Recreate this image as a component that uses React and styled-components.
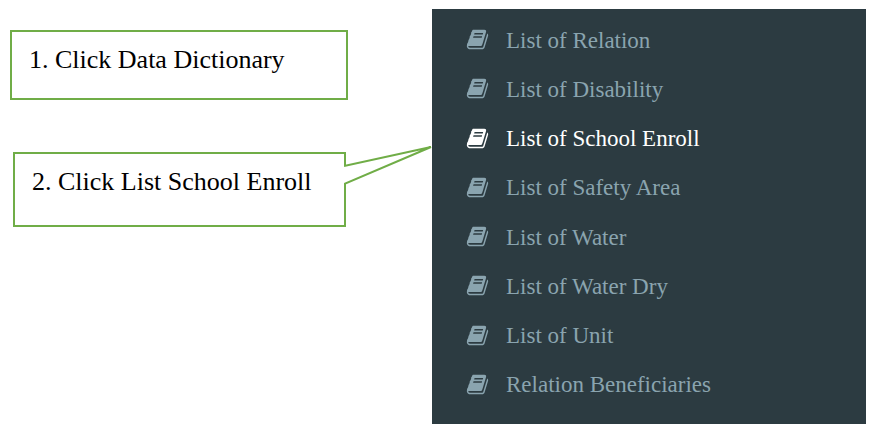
import React from 'react'
import styled, { createGlobalStyle } from 'styled-components';

const items = [
  "List of Relation",
  "List of Disability",
  "List of School Enroll",
  "List of Safety Area",
  "List of Water",
  "List of Water Dry",
  "List of Unit",
  "Relation Beneficiaries",
];

const BookIcon = () => (
  <svg viewBox="0 0 1792 1792" aria-hidden="true">
    <path d="M1703 478q40 57 18 129l-275 906q-19 64-76.500 107.500t-122.500 43.500h-923q-77 0-148.500-53.500t-99.500-131.500q-24-67-2-127 0-4 3-27t4-37q1-8-3-21.500t-3-19.500q2-11 8-21t16.500-23.500 16.500-23.500q23-38 45-91.500t30-91.500q3-10 .5-30t-.5-28q3-11 17-28t17-23q21-36 42-92t25-90q1-9-2.500-32t.5-28q4-13 22-30.500t22-22.500q19-26 42.500-84.500t27.500-96.500q1-8-3-25.500t-2-26.500q2-8 9-18t18-23 17-21q8-12 16.500-30.500t15-35 16-36 19.500-32 26.500-23.500 36-11.500 47.500 5.500l-1 3q38-9 51-9h761q74 0 114 56t18 130l-274 906q-36 119-71.500 153.500t-128.500 34.500h-869q-27 0-38 15-11 16-1 43 24 70 144 70h923q29 0 56-15.500t35-41.500l300-987q7-22 5-57 38 15 59 43zm-1064 2q-4 13 2 22.500t20 9.500h608q13 0 25.500-9.500t16.500-22.500l21-64q4-13-2-22.500t-20-9.500h-608q-13 0-25.500 9.500t-16.500 22.500zm-83 256q-4 13 2 22.500t20 9.500h608q13 0 25.500-9.500t16.500-22.500l21-64q4-13-2-22.500t-20-9.500h-608q-13 0-25.500 9.500t-16.500 22.500z" />
  </svg>
)

const App = () => {
  return (
    <Page>
      <GlobalStyle />
      <Steps>
        <Step>1. Click Data Dictionary</Step>
        <Step $pointed>
          2. Click List School Enroll
          <Pointer viewBox="0 0 88 40" aria-hidden="true">
            <path d="M0 20 L87 1 L0 38" />
          </Pointer>
        </Step>
      </Steps>
      <Sidebar>
        <Menu>
          {items.map((item) => {
            const active = item === "List of School Enroll";
            return <li key={item}>
              <MenuLink href="#" $active={active} aria-current={active ? "page" : undefined}>
                <BookIcon />
                {item}
              </MenuLink>
            </li>
          })}
        </Menu>
      </Sidebar>
    </Page>
  )
}

const GlobalStyle = createGlobalStyle`
  * {
    box-sizing: border-box;
  }
  body {
    margin: 0;
    background: white;
    font-family: "Liberation Serif", serif;
  }
`;

const Page = styled.div`
  display: grid;
  grid-template-columns: 432fr 434fr;
  align-items: start;
  padding: 9px 7px 7px 0;
`;

const Steps = styled.ol`
  display: grid;
  gap: 52px;
  margin: 0;
  padding: 21px 84px 0 10px;
  list-style: none;
`;

const Step = styled.li`
  position: relative;
  min-height: ${(props) => (props.$pointed ? 75 : 70)}px;
  margin: ${(props) => (props.$pointed ? '0 2px 0 3px' : '0')};
  padding: 14px 17px;
  border: 2px solid #70ad47;
  background: white;
  color: black;
  font-size: 26px;
  line-height: 28px;
`;

/* tail of the speech bubble, laid over the right border */
const Pointer = styled.svg`
  position: absolute;
  top: -8px;
  left: 100%;
  width: 88px;
  height: 40px;
  path {
    fill: white;
    stroke: #70ad47;
    stroke-width: 2;
  }
`;

const Sidebar = styled.nav`
  padding: 7px 34px 14px;
  background: #2c3b41;
`;

const Menu = styled.ul`
  display: grid;
  grid-auto-rows: 1fr;
  min-height: 394px;
  margin: 0;
  padding: 0;
  list-style: none;
`;

const MenuLink = styled.a`
  display: flex;
  align-items: center;
  gap: 17px;
  height: 100%;
  color: ${(props) => (props.$active ? 'white' : '#8aa4af')};
  font-size: 23px;
  line-height: 28px;
  text-decoration: none;
  svg {
    width: 23px;
    height: 23px;
    margin-bottom: 2px;
    fill: currentColor;
  }
`;

export default App
